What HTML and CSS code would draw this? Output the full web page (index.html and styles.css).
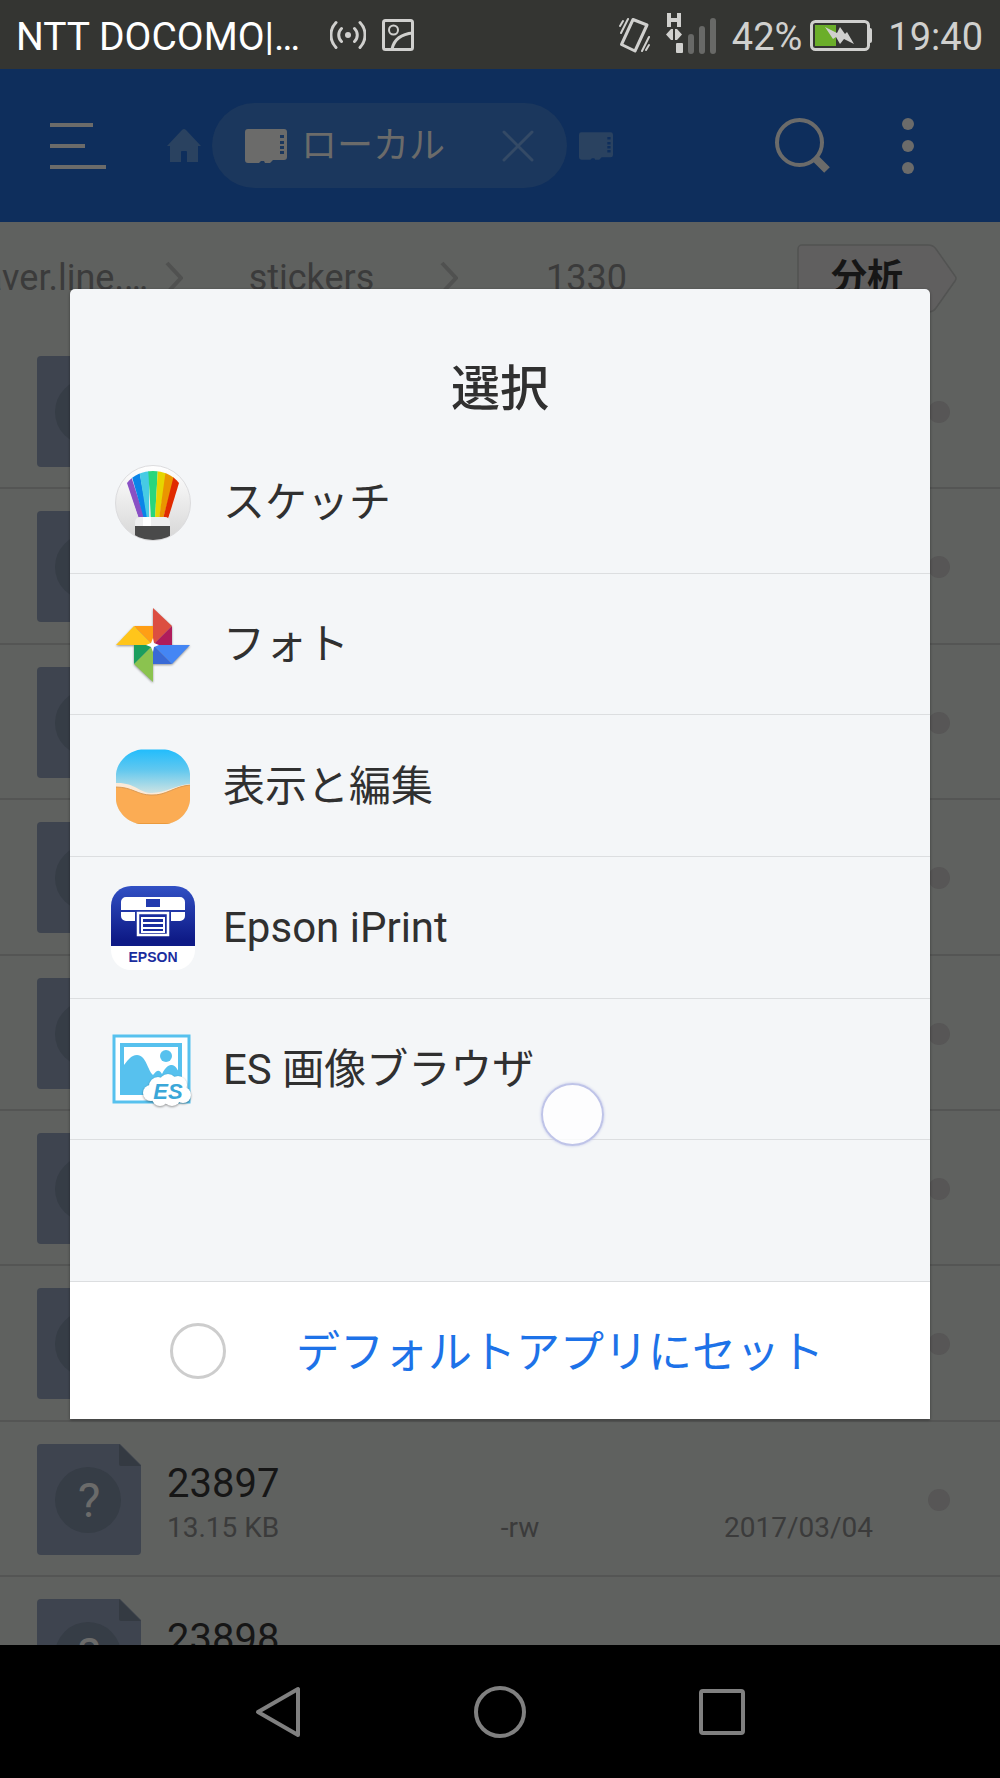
FILE: index.html
```html
<!DOCTYPE html>
<html lang="ja">
<head>
    <meta charset="UTF-8">
    <meta name="viewport" content="width=device-width, initial-scale=1.0">
    <title>選択</title>
    <link rel="stylesheet" href="styles.css">
</head>
<body>
    <svg class="symbols" aria-hidden="true">
        <symbol id="file" viewBox="0 0 104 111">
            <path d="M4 0H83L104 21V107a4 4 0 0 1-4 4H4a4 4 0 0 1-4-4V4a4 4 0 0 1 4-4z" fill="#3e444f"/>
            <path d="M82 0 104 22H84a2 2 0 0 1-2-2z" fill="#343a42"/>
            <circle cx="51" cy="56" r="33" fill="#363d46"/>
        </symbol>
        <symbol id="card" viewBox="0 0 42 34">
            <path fill-rule="evenodd" d="M3 0H39a3 3 0 0 1 3 3V28a3 3 0 0 1-3 3H28l-3 3h-5l-1-2h-3l-2 2H3a3 3 0 0 1-3-3V3a3 3 0 0 1 3-3zM35 6v3h4V6zm0 6v3h4v-3zm0 5v3h4v-3zm0 5v3h4v-3z"/>
        </symbol>
        <symbol id="chevron" viewBox="0 0 18 34">
            <path d="M2 2 16 17 2 32" fill="none" stroke="#505150" stroke-width="4"/>
        </symbol>
    </svg>

    <div class="screen">
        <header class="status-bar">
            <span class="carrier">NTT DOCOMO|…</span>
            <svg class="broadcast" width="36" height="30" viewBox="0 0 36 30" fill="none" stroke="#d0d0ce" stroke-width="3" stroke-linecap="round">
                <circle cx="18" cy="15" r="3" fill="#d0d0ce" stroke="none"/>
                <path d="M11.500 8.500a9 9 0 0 0 0 13M24.500 8.500a9 9 0 0 1 0 13M6 2.500a18 18 0 0 0 0 25M30 2.500a18 18 0 0 1 0 25"/>
            </svg>
            <svg width="32" height="32" viewBox="0 0 32 32" fill="none" stroke="#d0d0ce" stroke-width="3">
                <rect x="1.500" y="1.500" width="29" height="29" rx="2"/>
                <circle cx="11.500" cy="11" r="4.500" stroke-width="2"/>
                <path d="M10 30C12 21 19 15 31 14"/>
            </svg>
            <div class="status-right">
                <svg width="32" height="36" viewBox="0 0 32 36" fill="none" stroke="#d0d0ce" stroke-linecap="round">
                    <path d="M14 2.500 28 8 16 34 2.500 27.500z" stroke-width="3" stroke-linejoin="round"/>
                    <path d="M4 4 1 9M9 2 2 16M30 20 23 34M30 28l-3 5" stroke-width="2"/>
                </svg>
                <svg class="signal" width="50" height="41" viewBox="0 0 50 41">
                    <path d="M3 0V14M13 0V14M3 7H13" stroke="#d0d0ce" stroke-width="4"/>
                    <path d="M5 16v11l-5-5.500zM11 16v11l5-5.500zM5 16h2v11H5zM9 16h2v11H9z" fill="#d0d0ce"/>
                    <rect x="10" y="30" width="7" height="10" rx="1" fill="#d0d0ce"/>
                    <path d="M22 24a2 2 0 0 1 6 0v14a2 2 0 0 1-6 0zM33 16a2 2 0 0 1 6 0v22a2 2 0 0 1-6 0zM44 8a2 2 0 0 1 6 0v30a2 2 0 0 1-6 0z" fill="#686967"/>
                </svg>
                <span class="percent">42%</span>
                <svg class="battery" width="62" height="32" viewBox="0 0 62 32">
                    <rect x="1.500" y="1.500" width="57" height="28" rx="4" fill="none" stroke="#d0d0ce" stroke-width="3"/>
                    <path d="M59 8h1a2 2 0 0 1 2 2v11a2 2 0 0 1-2 2h-1z" fill="#d0d0ce"/>
                    <rect x="5" y="5" width="21" height="21" fill="#6bae2a"/>
                    <path d="M15 7 27 13 30 7 35 14 37 12 44 24 34 19 30 24 26 17 23 19z" fill="#d0d0ce"/>
                </svg>
                <span>19:40</span>
            </div>
        </header>

        <nav class="app-bar">
            <button class="icon-button" aria-label="メニュー">
                <svg width="56" height="46" viewBox="0 0 56 46" fill="#6b6b6a">
                    <path d="M0 0H43V4H0zM0 21H35V25H0zM0 42H56V46H0z"/>
                </svg>
            </button>
            <a href="#home" class="home" aria-label="ホーム">
                <svg width="34" height="34" viewBox="0 0 34 34" fill="#2a4260">
                    <path d="M15 1a3 3 0 0 1 4 0L34 17H31V33H20V23a1 1 0 0 0-1-1H15a1 1 0 0 0-1 1V33H3V17H0z"/>
                </svg>
            </a>
            <div class="tab">
                <svg width="42" height="34" fill="#6b6b6a"><use href="#card"/></svg>
                <span>ローカル</span>
                <button class="icon-button tab-close" aria-label="閉じる">
                    <svg width="32" height="32" viewBox="0 0 32 32" stroke="#344a66" stroke-width="3" stroke-linecap="round">
                        <path d="M2 2 30 30M30 2 2 30"/>
                    </svg>
                </button>
            </div>
            <a href="#card-tab" class="next-tab" aria-label="SDカード">
                <svg width="34" height="28" fill="#2a4260"><use href="#card"/></svg>
            </a>
            <div class="actions">
                <button class="icon-button" aria-label="検索">
                    <svg width="56" height="56" viewBox="0 0 56 56" stroke="#6b6b6a" fill="none">
                        <circle cx="24.500" cy="24.500" r="22.500" stroke-width="4"/>
                        <path d="M40 40 52 52" stroke-width="8"/>
                    </svg>
                </button>
                <button class="icon-button" aria-label="その他">
                    <svg width="12" height="56" viewBox="0 0 12 56" fill="#6b6b6a">
                        <circle cx="6" cy="6" r="6"/><circle cx="6" cy="28" r="6"/><circle cx="6" cy="50" r="6"/>
                    </svg>
                </button>
            </div>
        </nav>

        <main class="files">
            <div class="path-bar">
                <div class="crumbs">
                    <a href="#line" class="crumb">naver.line.…</a>
                    <svg width="18" height="34"><use href="#chevron"/></svg>
                    <a href="#stickers" class="crumb">stickers</a>
                    <svg width="18" height="34"><use href="#chevron"/></svg>
                    <a href="#1330" class="crumb">1330</a>
                </div>
                <button class="analyze">
                    <svg class="analyze-shape" width="160" height="69" viewBox="0 0 160 69" fill="#605f5f" stroke="#525352" stroke-width="1.500">
                        <path d="M5 1H131c4 0 6 1 8 4L158 32q2 2 0 5L139 64c-2 3-4 4-8 4H5a4 4 0 0 1-4-4V5a4 4 0 0 1 4-4z"/>
                    </svg>
                    <span class="analyze-label">分析</span>
                </button>
            </div>

            <ul class="file-list">
                <li class="file"><svg width="104" height="111"><use href="#file"/></svg><span class="dot"></span></li>
                <li class="file"><svg width="104" height="111"><use href="#file"/></svg><span class="dot"></span></li>
                <li class="file"><svg width="104" height="111"><use href="#file"/></svg><span class="dot"></span></li>
                <li class="file"><svg width="104" height="111"><use href="#file"/></svg><span class="dot"></span></li>
                <li class="file"><svg width="104" height="111"><use href="#file"/></svg><span class="dot"></span></li>
                <li class="file"><svg width="104" height="111"><use href="#file"/></svg><span class="dot"></span></li>
                <li class="file"><svg width="104" height="111"><use href="#file"/></svg><span class="dot"></span></li>
                <li class="file">
                    <svg width="104" height="111"><use href="#file"/><text x="52" y="73" class="file-mark">?</text></svg>
                    <div class="file-info">
                        <div class="file-name">23897</div>
                        <div class="file-meta">
                            <span>13.15 KB</span>
                            <span>-rw</span>
                            <span class="file-date">2017/03/04</span>
                        </div>
                    </div>
                    <span class="dot"></span>
                </li>
                <li class="file">
                    <svg width="104" height="111"><use href="#file"/><text x="52" y="73" class="file-mark">?</text></svg>
                    <div class="file-info">
                        <div class="file-name">23898</div>
                    </div>
                </li>
            </ul>

            <div class="overlay">
                <div class="dialog" role="dialog" aria-labelledby="dialog-title">
                    <h1 class="dialog-title" id="dialog-title">選択</h1>
                    <ul class="app-list">
                        <li>
                            <button class="app">
                                <svg width="84" height="84" viewBox="0 0 84 84">
                                    <defs>
                                        <linearGradient id="disc" x1="0" y1="0" x2="0" y2="1"><stop offset="0" stop-color="#fff"/><stop offset="1" stop-color="#d6d6d6"/></linearGradient>
                                        <clipPath id="disc-clip"><circle cx="42" cy="42" r="37"/></clipPath>
                                        <clipPath id="fan-clip"><path d="M16 22C28 6 56 6 68 22L57 58H28z"/></clipPath>
                                    </defs>
                                    <circle cx="42" cy="42" r="37.500" fill="url(#disc)" stroke="#dcdcde"/>
                                    <g clip-path="url(#fan-clip)">
                                        <path d="M10 5 20 15 34 58H28L14 20z" fill="#8a50c4"/>
                                        <path d="M21 16 28 8 37 58H33z" fill="#0a84e8"/>
                                        <path d="M28 8H38V58H36z" fill="#46cbe4"/>
                                        <path d="M37 5H47L44 58H40z" fill="#29d67c"/>
                                        <path d="M47 5 56 10 48 58H44z" fill="#e6d500"/>
                                        <path d="M55 8 64 15 52 58H48z" fill="#ea9500"/>
                                        <path d="M63 14 72 20 57 58H52z" fill="#e02a00"/>
                                    </g>
                                    <g clip-path="url(#disc-clip)">
                                        <path d="M24 66V61a5 5 0 0 1 5-5H54a5 5 0 0 1 5 5V66z" fill="#eeeeef"/>
                                        <path d="M32 56H40V66H32z" fill="#fff"/>
                                        <path d="M24 65H59V82H24z" fill="#4a4a4a"/>
                                    </g>
                                </svg>
                                <span>スケッチ</span>
                            </button>
                        </li>
                        <li>
                            <button class="app">
                                <svg class="pinwheel" width="84" height="84" viewBox="0 0 84 84">
                                    <path d="M42 5 61 23 42 42z" fill="#dc4e41"/>
                                    <path d="M61 23V42H42z" fill="#af1c5c"/>
                                    <path d="M79 42 61 61 42 42z" fill="#4486f4"/>
                                    <path d="M61 61H42V42z" fill="#396ad6"/>
                                    <path d="M42 79 23 61 42 42z" fill="#8bc34f"/>
                                    <path d="M23 61V42H42z" fill="#1b9e5e"/>
                                    <path d="M5 42 23 23 42 42z" fill="#ffc51b"/>
                                    <path d="M23 23H42V42z" fill="#ff9e15"/>
                                    <path d="M42 35 43 40 48 42 43 44 42 49 40 44 35 42 40 40z" fill="#fff"/>
                                </svg>
                                <span>フォト</span>
                            </button>
                        </li>
                        <li>
                            <button class="app">
                                <svg width="84" height="84" viewBox="0 0 84 84">
                                    <defs>
                                        <linearGradient id="sea" x1="0" y1="0" x2="0" y2="1"><stop offset="0" stop-color="#14baff"/><stop offset=".3" stop-color="#62c8ef"/><stop offset=".6" stop-color="#d8e6e2"/></linearGradient>
                                        <clipPath id="beach"><path d="M30 4.500H54C68 6 78 17 79 29V55C78 67 68 78 54 79H30C17 78 6 67 5 55V29C6 17 17 6 30 4.500z"/></clipPath>
                                    </defs>
                                    <g clip-path="url(#beach)">
                                        <path d="M0 0H84V84H0z" fill="url(#sea)"/>
                                        <path d="M4 38C24 37 28 48 41 48 55 48 64 40 80 39V50H4z" fill="#fbead8"/>
                                        <path d="M4 42C22 42 26 50 40 50 55 51 63 41 80 40V84H4z" fill="#fbac54"/>
                                        <path d="M4 42C22 42 26 50 40 50 55 51 63 41 80 40" fill="none" stroke="#d99a55"/>
                                        <path d="M20 79H64" stroke="#eb9a3c" stroke-width="2"/>
                                    </g>
                                </svg>
                                <span>表示と編集</span>
                            </button>
                        </li>
                        <li>
                            <button class="app">
                                <svg width="84" height="84" viewBox="0 0 84 84">
                                    <defs>
                                        <linearGradient id="epson" x1="0" y1="0" x2="0" y2="1"><stop offset="0" stop-color="#3150c4"/><stop offset=".9" stop-color="#0e1a86"/></linearGradient>
                                    </defs>
                                    <rect width="84" height="84" rx="20" fill="#fff"/>
                                    <path d="M0 60V20A20 20 0 0 1 20 0H64A20 20 0 0 1 84 20V60z" fill="url(#epson)"/>
                                    <path d="M15 11H69a5 5 0 0 1 5 5V24H10V16a5 5 0 0 1 5-5zM10 26H24V35H15a5 5 0 0 1-5-5zM60 26H74V30a5 5 0 0 1-5 5H60z" fill="#fff"/>
                                    <path d="M35 13H49V21H35z" fill="#223aae"/>
                                    <path d="M27 27H57V49H27z" fill="#1a2d9e" stroke="#fff" stroke-width="2.500"/>
                                    <path d="M31 32H53M31 37H53M31 42H53M31 46H53M31 31V47M53 31V47" stroke="#fff" stroke-width="2"/>
                                    <text x="42" y="76" class="epson-text">EPSON</text>
                                </svg>
                                <span>Epson iPrint</span>
                            </button>
                        </li>
                        <li>
                            <button class="app">
                                <svg class="es-icon" width="84" height="84" viewBox="0 0 84 84">
                                    <rect x="3" y="8" width="75" height="66" fill="#fff" stroke="#57c1ee" stroke-width="3"/>
                                    <rect x="9" y="15" width="62" height="52" fill="#57c1ee"/>
                                    <path d="M13 19H67V63H13z" fill="#fff"/>
                                    <path d="M9 42C17 32 20 27 26 27 35 27 37 43 42 47 46 42 48 41 51 46 55 38 58 37 61 37 66 38 67 44 71 48V67H9z" fill="#57c1ee"/>
                                    <circle cx="55" cy="28" r="6" fill="#57c1ee"/>
                                    <g class="cloud" fill="#fff">
                                        <circle cx="40" cy="65" r="8"/><circle cx="47" cy="58" r="9"/><circle cx="57" cy="55" r="9"/><circle cx="67" cy="57" r="9"/><circle cx="72" cy="67" r="8"/><circle cx="61" cy="69" r="9"/><circle cx="49" cy="70" r="8"/>
                                    </g>
                                    <text x="57" y="71" class="es-text">ES</text>
                                </svg>
                                <span>ES 画像ブラウザ</span>
                            </button>
                        </li>
                        <li></li>
                    </ul>
                    <div class="dialog-footer">
                        <input type="checkbox" id="set-default">
                        <label for="set-default">デフォルトアプリにセット</label>
                    </div>
                    <span class="touch"></span>
                </div>
            </div>
        </main>

        <footer class="nav-bar">
            <button class="icon-button" aria-label="戻る">
                <svg width="52" height="52" viewBox="0 0 52 52" fill="none" stroke="#808080" stroke-width="4" stroke-linejoin="round"><path d="M46 3V49L6 26z"/></svg>
            </button>
            <button class="icon-button" aria-label="ホーム画面">
                <svg width="52" height="52" viewBox="0 0 52 52" fill="none" stroke="#808080" stroke-width="4"><circle cx="26" cy="26" r="24"/></svg>
            </button>
            <button class="icon-button" aria-label="最近使ったアプリ">
                <svg width="52" height="52" viewBox="0 0 52 52" fill="none" stroke="#808080" stroke-width="4"><rect x="5" y="5" width="42" height="42" rx="2"/></svg>
            </button>
        </footer>
    </div>
</body>
</html>
```

FILE: styles.css
```css
* {
    box-sizing: border-box;
}

body {
    margin: 0;
    font-family: Roboto, "Noto Sans CJK JP", sans-serif;
    background: #000;
}

ul {
    list-style: none;
    margin: 0;
    padding: 0;
}

svg {
    display: block;
    flex: none;
}

a {
    color: inherit;
    text-decoration: none;
}

button {
    font: inherit;
    color: inherit;
    border: none;
    background: none;
    padding: 0;
    cursor: pointer;
}

.symbols {
    position: absolute;
    width: 0;
    height: 0;
}

.screen {
    display: flex;
    flex-direction: column;
    height: 100vh;
}

/* status bar */
.status-bar {
    display: flex;
    align-items: center;
    height: 69px;
    padding: 0 17px 0 16px;
    background: #343532;
    color: #d0d0ce;
    font-size: 38px;
    line-height: 44px;
}

.status-bar span {
    padding-top: 4px;
}

.status-bar .carrier {
    color: #fff;
    font-size: 39px;
}

.broadcast {
    margin: 0 16px 0 30px;
}

.status-right {
    display: flex;
    align-items: center;
    margin-left: auto;
}

.signal {
    margin: 0 16px 2px 15px;
}

.battery {
    margin: 2px 16px 0 8px;
}

/* app bar */
.app-bar {
    display: flex;
    align-items: center;
    height: 153px;
    padding: 0 86px 0 50px;
    background: #0e2e5c;
    color: #6b6b6a;
}

.home {
    margin: 0 11px 0 61px;
}

.tab {
    display: flex;
    align-items: center;
    width: 355px;
    height: 85px;
    padding: 0 33px;
    border-radius: 43px;
    background: #1b375d;
    font-size: 36px;
    line-height: 48px;
}

.tab span {
    margin-left: 14px;
}

.tab-close {
    margin-left: auto;
}

.next-tab {
    margin-left: 12px;
}

.actions {
    display: flex;
    gap: 71px;
    margin-left: auto;
}

/* file list */
.files {
    position: relative;
    display: flex;
    flex-direction: column;
    flex: 1;
    min-height: 0;
    background: #5f615f;
}

.path-bar {
    display: flex;
    align-items: center;
    height: 112px;
    padding-right: 43px;
    color: #3b3b3b;
    font-size: 36px;
    line-height: 42px;
}

.crumbs {
    display: flex;
    align-items: center;
    justify-content: flex-end;
    flex: 1;
    min-width: 0;
    overflow: hidden;
    margin-right: 82px;
}

.crumb {
    flex: none;
    width: 257px;
    text-align: center;
}

.crumb:first-child {
    width: auto;
    padding-right: 17px;
}

.analyze {
    display: grid;
    align-items: center;
    color: #161616;
    font-weight: bold;
}

.analyze-shape,
.analyze-label {
    grid-area: 1 / 1;
}

.analyze-label {
    padding-right: 20px;
}

.file-list {
    display: grid;
    grid-template-rows: repeat(8, 16fr) 7fr;
    flex: 1;
    min-height: 0;
}

.file {
    display: flex;
    align-items: flex-start;
    min-height: 0;
    overflow: hidden;
    padding: 22px 50px 0 37px;
    border-bottom: 2px solid #545554;
}

.file:last-child {
    border-bottom: none;
}

.file-mark {
    fill: #6b6b6a;
    font-size: 48px;
    text-anchor: middle;
}

.file-info {
    flex: 1;
    padding: 16px 55px 0 26px;
}

.file-name {
    color: #161616;
    font-size: 40px;
    line-height: 48px;
}

.file-meta {
    display: grid;
    grid-template-columns: 1fr auto 1fr;
    color: #3b3b3b;
    font-size: 28px;
    line-height: 40px;
}

.file-date {
    text-align: right;
}

.dot {
    width: 22px;
    height: 22px;
    margin: 45px 0 0 auto;
    border-radius: 50%;
    background: #575656;
}

/* dialog */
.overlay {
    position: absolute;
    inset: 0;
    display: flex;
    justify-content: center;
    align-items: flex-start;
    padding-top: 67px;
}

.dialog {
    position: relative;
    width: 86%;
    border-radius: 5px 5px 0 0;
    background: #f4f6f8;
    color: #303030;
    box-shadow: 0 1px 3px rgba(0, 0, 0, 0.4);
}

.dialog-title {
    margin: 0;
    padding: 69px 0 10px;
    font-size: 49px;
    font-weight: 500;
    line-height: 64px;
    text-align: center;
}

.app-list {
    display: grid;
    grid-template-rows: repeat(6, 1fr);
    height: 850px;
}

.app-list li {
    display: flex;
    border-bottom: 1px solid #dcdee0;
}

.app {
    display: flex;
    align-items: center;
    gap: 28px;
    width: 100%;
    padding: 2px 0 0 41px;
    font-size: 42px;
    line-height: 60px;
    text-align: left;
}

.pinwheel,
.cloud {
    filter: drop-shadow(0 1px 1px rgba(0, 0, 0, 0.4));
}

.epson-text {
    fill: #1a2d9e;
    font: bold 14px "Liberation Sans", sans-serif;
    text-anchor: middle;
}

.es-text {
    fill: #3ba7d8;
    font: italic bold 22px "Liberation Sans", sans-serif;
    text-anchor: middle;
}

.dialog-footer {
    display: flex;
    align-items: center;
    gap: 70px;
    height: 137px;
    padding-left: 100px;
    background: #fff;
    color: #1d72e8;
    font-size: 44px;
    line-height: 60px;
}

.dialog-footer label {
    padding-top: 4px;
}

.dialog-footer input {
    appearance: none;
    width: 56px;
    height: 56px;
    margin: 0;
    border: 3px solid #cdcdcd;
    border-radius: 50%;
}

.touch {
    position: absolute;
    left: 471px;
    top: 794px;
    width: 63px;
    height: 63px;
    border: 2px solid #bfc4e8;
    border-radius: 50%;
    background: rgba(255, 255, 255, 0.8);
    box-shadow: 0 0 3px #bfc4e8;
}

/* system navigation */
.nav-bar {
    display: flex;
    justify-content: center;
    align-items: center;
    gap: 170px;
    height: 133px;
    background: #000;
}
```
